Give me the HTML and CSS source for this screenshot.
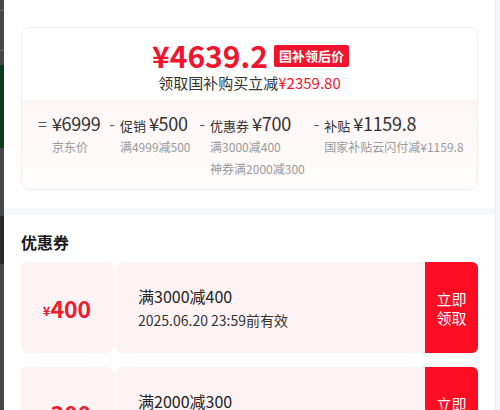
FILE: index.html
```html
<!DOCTYPE html>
<html lang="zh-CN">
<head>
    <meta charset="UTF-8">
    <meta name="viewport" content="width=device-width, initial-scale=1.0">
    <title>国补领后价</title>
    <link rel="stylesheet" href="styles.css">
</head>
<body>
    <div class="page">
        <!-- page behind the sheet, dimmed -->
        <div class="backdrop">
            <div class="backdrop-line"></div>
            <div class="backdrop-line"></div>
            <div class="backdrop-green"></div>
            <div class="backdrop-text"></div>
        </div>

        <div class="sheet">
            <!-- Price summary -->
            <div class="price-section">
                <div class="price-card">
                    <div class="price-top">
                        <div class="price-main">
                            <span class="price-num">¥4639.2</span>
                            <span class="price-tag">国补领后价</span>
                        </div>
                        <div class="price-desc">领取国补购买立减<span class="red">¥2359.80</span></div>
                    </div>
                    <div class="price-break">
                        <div class="break-col">
                            <span class="sign">=</span>
                            <div class="break-body">
                                <div class="break-main"><span class="amount">¥6999</span></div>
                                <div class="break-sub">京东价</div>
                            </div>
                        </div>
                        <div class="break-col">
                            <span class="sign">-</span>
                            <div class="break-body">
                                <div class="break-main"><span class="label">促销</span><span class="amount">¥500</span></div>
                                <div class="break-sub">满4999减500</div>
                            </div>
                        </div>
                        <div class="break-col">
                            <span class="sign">-</span>
                            <div class="break-body">
                                <div class="break-main"><span class="label">优惠券</span><span class="amount">¥700</span></div>
                                <div class="break-sub">满3000减400</div>
                                <div class="break-sub">神券满2000减300</div>
                            </div>
                        </div>
                        <div class="break-col">
                            <span class="sign">-</span>
                            <div class="break-body">
                                <div class="break-main"><span class="label">补贴</span><span class="amount">¥1159.8</span></div>
                                <div class="break-sub">国家补贴云闪付减¥1159.8</div>
                            </div>
                        </div>
                    </div>
                </div>
            </div>

            <div class="divider"></div>

            <!-- Coupons -->
            <div class="coupon-section">
                <h3 class="section-title">优惠券</h3>

                <div class="coupon">
                    <div class="coupon-left"><span class="yen">¥</span>400</div>
                    <div class="coupon-gap"></div>
                    <div class="coupon-right">
                        <div class="coupon-rule">满3000减400</div>
                        <div class="coupon-date">2025.06.20 23:59前有效</div>
                    </div>
                    <button class="coupon-btn">立即<br>领取</button>
                </div>

                <div class="coupon">
                    <div class="coupon-left"><span class="yen">¥</span>300</div>
                    <div class="coupon-gap"></div>
                    <div class="coupon-right">
                        <div class="coupon-rule">满2000减300</div>
                        <div class="coupon-date">2025.06.20 23:59前有效</div>
                    </div>
                    <button class="coupon-btn">立即<br>领取</button>
                </div>
            </div>
        </div>

        <div class="scroll-track"></div>
    </div>
</body>
</html>
```

FILE: styles.css
```css
body {
    margin: 0;
    padding: 0;
    font-family: "Noto Sans CJK SC", "Noto Sans", sans-serif;
    background: #fff;
    color: #333;
}
.page {
    display: flex;
    height: 410px;
    overflow: hidden;
}
/* Backdrop strip */
.backdrop {
    width: 4px;
    flex-shrink: 0;
    background: #474747;
    display: flex;
    flex-direction: column;
}
.backdrop-line {
    height: 1px;
    margin-top: 10px;
    background: #6a6a6a;
}
.backdrop-line + .backdrop-line {
    margin-top: 39px;
}
.backdrop-green {
    height: 83px;
    margin-top: 14px;
    background: #0c3a1b;
}
.backdrop-text {
    height: 48px;
    margin-top: 68px;
    background: #2a2a2a;
}
.scroll-track {
    width: 4px;
    flex-shrink: 0;
    background: #f5f5f7;
    border-left: 1px solid #eeeef1;
}
/* Sheet */
.sheet {
    flex: 1;
    min-width: 0;
    background: #fff;
}
.price-section {
    padding: 27px 17px 18px;
}
.price-card {
    border: 1px solid #f0f0f0;
    border-radius: 8px;
    overflow: hidden;
}
.price-top {
    height: 72px;
    text-align: center;
    padding-top: 10px;
    box-sizing: border-box;
}
.price-main {
    display: flex;
    justify-content: center;
    align-items: center;
    gap: 6px;
    height: 34px;
}
.price-num {
    color: #f2142c;
    font-size: 30px;
    font-weight: bold;
    line-height: 34px;
    padding-left: 2px;
}
.price-tag {
    background: #f2142c;
    color: #fff;
    font-size: 13px;
    font-weight: bold;
    line-height: 22px;
    padding: 0 5px;
    border-radius: 2px;
    margin-top: 2px;
}
.price-desc {
    font-size: 15px;
    line-height: 22px;
    color: #333;
}
.red {
    color: #f2142c;
}
.price-break {
    display: flex;
    gap: 9px;
    padding: 10px 16px 9px;
    background: linear-gradient(#fdf5f5, #fffdfd);
}
.break-col {
    display: flex;
}
.sign {
    font-size: 16px;
    line-height: 26px;
    color: #555;
    margin-right: 5px;
}
.break-main {
    display: flex;
    align-items: baseline;
    gap: 3px;
    height: 26px;
    line-height: 26px;
    white-space: nowrap;
}
.label {
    font-size: 13px;
    color: #333;
}
.amount {
    font-size: 18px;
    color: #333;
    letter-spacing: -0.3px;
}
.break-sub {
    font-size: 12px;
    line-height: 22px;
    color: #999;
    white-space: nowrap;
}
.divider {
    height: 7px;
    background: #f6f7fb;
}
/* Coupons */
.coupon-section {
    padding: 16px 17px 0;
}
.section-title {
    margin: 0 0 8px;
    font-size: 16px;
    line-height: 23px;
    font-weight: bold;
    color: #1a1a1a;
}
.coupon {
    display: flex;
    height: 91px;
    margin-bottom: 14px;
}
.coupon-left {
    width: 92px;
    background: #fdf3f4;
    border-radius: 6px;
    display: flex;
    align-items: center;
    justify-content: center;
    color: #ee1b30;
    font-size: 23px;
    font-weight: bold;
}
.yen {
    font-size: 13px;
    margin-top: 5px;
}
.coupon-gap {
    width: 4px;
    margin: 5px 0;
    background: #fdf7f8;
}
.coupon-right {
    flex: 1;
    background: #fdf3f4;
    border-radius: 6px 0 0 6px;
    padding-left: 21px;
    display: flex;
    flex-direction: column;
    justify-content: center;
}
.coupon-rule {
    font-size: 16px;
    line-height: 24px;
    color: #222;
}
.coupon-date {
    font-size: 14px;
    line-height: 24px;
    color: #333;
}
.coupon-btn {
    width: 53px;
    border: none;
    border-radius: 0 6px 6px 0;
    background: #fc0d22;
    color: #fff;
    font-family: inherit;
    font-size: 15px;
    line-height: 19px;
    padding: 0;
    cursor: pointer;
}
```
